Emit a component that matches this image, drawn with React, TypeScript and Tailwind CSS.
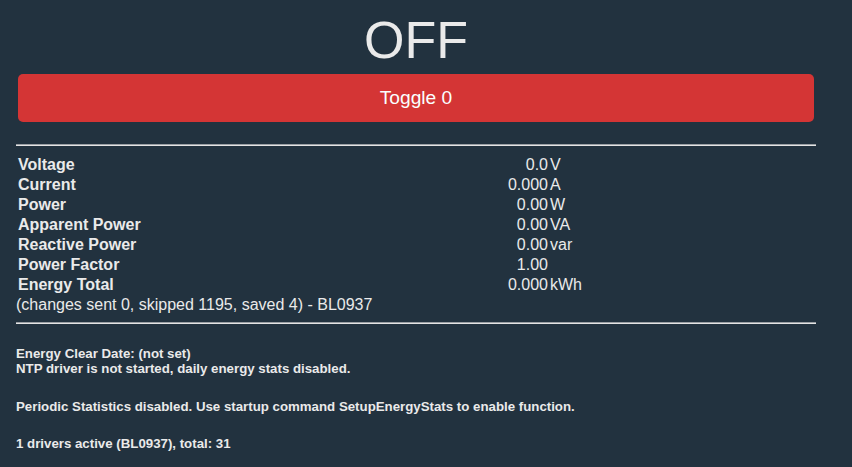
import React from 'react';

const rows: [string, string, string][] = [
  ['Voltage', '0.0', 'V'],
  ['Current', '0.000', 'A'],
  ['Power', '0.00', 'W'],
  ['Apparent Power', '0.00', 'VA'],
  ['Reactive Power', '0.00', 'var'],
  ['Power Factor', '1.00', ''],
  ['Energy Total', '0.000', 'kWh'],
];

function Rule() {
  return <div className="h-[2px] border-t border-t-[#9a9fa4] border-b border-b-[#e4e4e4]" />;
}

export default function App() {
  return (
    <div className="min-h-[467px] w-full bg-[#22323f] text-[#eaeaea] font-['Liberation_Sans',Arial,sans-serif]">
      <div className="ml-4 w-[800px] pt-[10px]">
        <div className="text-center text-[52px] leading-[60px]">OFF</div>

        <button className="mx-[2px] mt-[4px] flex h-[48px] w-[796px] items-center justify-center rounded-[5px] bg-[#d43535] text-[19.2px] text-[#faffff]">
          Toggle 0
        </button>

        <div className="mt-[22px]">
          <Rule />
        </div>

        <div className="mt-[9px] grid grid-cols-[470px_62px_1fr] text-[16px] leading-[20px]">
          {rows.map(([label, value, unit]) => (
            <React.Fragment key={label}>
              <div className="pl-[2px] font-bold">{label}</div>
              <div className="text-right">{value}</div>
              <div className="pl-[2px]">{unit}</div>
            </React.Fragment>
          ))}
        </div>
        <div className="text-[16px] leading-[20px]">(changes sent 0, skipped 1195, saved 4) - BL0937</div>

        <div className="mt-[7px]">
          <Rule />
        </div>

        <div className="text-[13.28px] font-bold leading-[15.3px]">
          <div className="mt-[22px]">
            Energy Clear Date: (not set)
            <br />
            NTP driver is not started, daily energy stats disabled.
          </div>
          <div className="mt-[22px]">
            Periodic Statistics disabled. Use startup command SetupEnergyStats to enable function.
          </div>
          <div className="mt-[22px]">1 drivers active (BL0937), total: 31</div>
        </div>
      </div>
    </div>
  );
}
